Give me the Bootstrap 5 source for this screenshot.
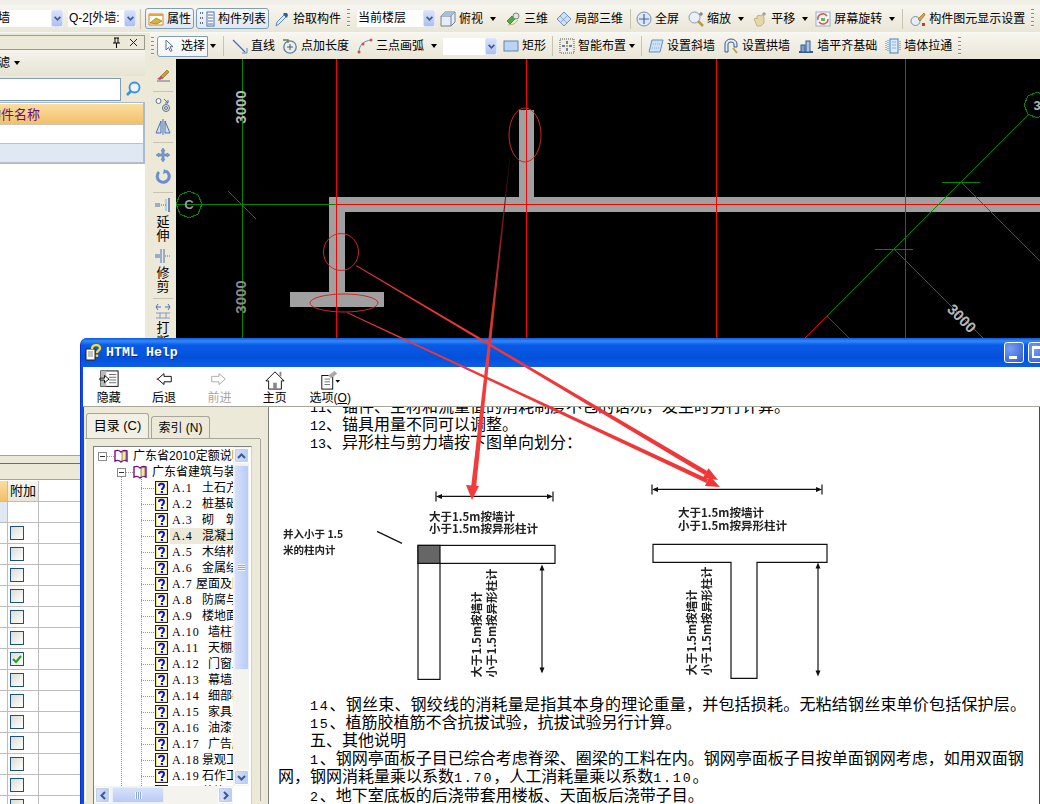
<!DOCTYPE html>
<html lang="zh-CN"><head><meta charset="utf-8"><title>HTML Help</title>
<link href="https://cdn.jsdelivr.net/npm/bootstrap@5.3.0/dist/css/bootstrap.min.css" rel="stylesheet">
<style>
html,body{width:1040px;height:804px;margin:0;overflow:hidden}
body{background:#ece9d8;font-family:"Liberation Sans","Noto Sans CJK SC",sans-serif;font-size:12px;color:#000;line-height:1.2}
.top-strip{height:5px;background:#f1f0e8}
.tb-one{height:28px;background:linear-gradient(#f7f6ef,#e9e6d6);border-bottom:1px solid #f8f8f4;overflow:hidden}
.main-area{height:771px}
.left-pane{width:145px;flex:none;padding-top:1px;overflow:hidden}
.right-pane{width:895px;margin-left:5px}
.tb-two{height:26px;flex:none;background:linear-gradient(#f7f6ef,#e9e6d6);overflow:hidden;position:relative}
.tb-end{margin-left:auto}
.tbi.btn{display:inline-flex;align-items:center;gap:3px;padding:0 2px;height:21px;font-size:12px;line-height:1;color:#000;border:1px solid transparent;border-radius:3px;white-space:nowrap;flex:none;background:none}
.tbi.on{border-color:#7e9db9;background:linear-gradient(#f4f8fb,#dfe9f2)}
.tbi.sel.btn{padding:0 2px 0 3px;gap:4px;border-radius:3px 0 0 3px;background:linear-gradient(#fff,#f1f4f8)}
.ic{width:16px;height:16px;flex:none;display:block}
.tri{width:0;height:0;border:3px solid transparent;border-top:4px solid #000;border-bottom:0;margin-left:4px;flex:none}
.sepv{width:1px;height:20px;background:#c7c5b2;flex:none;margin:0 4px}
.sepv-t{margin-right:2px}
.grip{width:3px;height:19px;flex:none;margin:0 3px;background:repeating-linear-gradient(#8c8a7e 0 1px,#f7f6f0 1px 2px,transparent 2px 4px)}
.grip-f{margin:0 2px 0 1px}
.cbo{display:flex;align-items:center;background:#fff;height:17px;flex:none;overflow:hidden;font-size:12px}
.cbo-txt{flex:1;white-space:nowrap;padding-left:1px;overflow:hidden}
.cbo-btn{width:12px;height:17px;flex:none;background:linear-gradient(#d7e2fb,#aebff0);border:1px solid #dce6fb;border-radius:2px;display:flex;align-items:center;justify-content:center}
.cw-a{width:63px}.cw-a .cbo-txt{margin-left:-3px}
.cw-b{width:68px;margin-left:5px}
.cw-c{width:78px}.cw-d{width:54px}
.ml0{margin-left:0}.ml1{margin-left:1px}.ml2{margin-left:2px}.ml3{margin-left:3px}.ml4{margin-left:4px}.ml7{margin-left:7px}.mr3{margin-right:3px}
.pane-cap{height:15px;margin-top:1px;border-top:1px solid #9a9a90;border-bottom:1px solid #9a9a90;border-right:1px solid #9a9a90;background:#ece9d8;padding-right:6px;gap:8px;flex:none}
.pane-filter{height:26px;background:linear-gradient(#f5f4ec,#e6e3d2);flex:none}
.clip-l{margin-left:-2px}
.pane-search{height:26px;flex:none;background:#ece9d8;padding:1px 0}
.search-box{width:121px;height:23px;background:#fff;border:1px solid #7f9db9;border-left:0}
.search-ic{margin-left:4px}
.grid-a{flex:none;background:#fff;border:1px solid #a8bcd0;border-left:0;border-right:2px solid #a8bcd0;padding:1px 0;height:62px}
.g-hd{height:21px;background:linear-gradient(#fbdd9f,#f2c069);color:#660a85;font-size:13px;line-height:21px;border-bottom:1px solid #c8c8c0;white-space:nowrap;overflow:hidden}
.g-hd span{margin-left:-12px;display:block}
.g-row{height:19px;border-bottom:1px solid #b8c0c8}
.g-row.alt{background:#dfe8f3}
.pane-white{flex:1;background:#fff}
.pane-cap2{height:25px;flex:none;background:linear-gradient(#ece9d8 0 7px,#6f6f60 7px 8px,#ece9d8 8px);border-top:1px solid #8fa8be;border-bottom:1px solid #8fa8be}
.grid-b{flex:none;background:#fff;padding-top:1px;height:324px;overflow:hidden}
.gb-row{height:21px;display:flex;border-bottom:1px solid #bdbdbd}
.gb-a{width:8px;border-right:1px solid #bdbdbd;flex:none}
.gb-b{width:31px;border-right:1px solid #bdbdbd;flex:none;display:flex;align-items:center;padding-left:2px}
.gb-hd .gb-a{background:linear-gradient(#fbdd9f,#f2c069)}
.gb-hd .gb-b{background:linear-gradient(#f7f6ee,#e9e6d6);font-size:13px}
.gb-alt .gb-a{background:#dfe8f3}
.cb{width:14px;height:14px;border:1px solid #1c5180;background:linear-gradient(135deg,#dcdcd4,#fff);display:flex;align-items:center;justify-content:center}
.v-tool{width:26px;flex:none;background:#ece9d8;padding-top:5px;align-items:center;overflow:hidden}
.v-tool .ic{margin:3px 0}
.v-sep{width:20px;height:1px;background:#c7c5b2;margin:4px 0 1px;flex:none}
.v-sep-f{margin:5px 0 2px}
.v-t2{margin-top:5px!important}
.v-txt{font-size:13px;line-height:14px;width:13px;text-align:center;margin-top:-1px;flex:none}
.cad-box{flex:1;background:#000;overflow:hidden}
.cad-svg{display:block}
.cad-svg text{font-family:"Liberation Sans",sans-serif}
.help-win{left:80px;top:338px;width:1000px;height:480px;background:#0a4fdc;border-radius:7px 7px 0 0;padding:0 3px 3px 3px;border-left:1px solid #0831d9}
.help-cap{height:29px;margin:0 -3px;padding:0 8px 0 4px;background:linear-gradient(#0a58e4 0,#2f8bf8 3px,#0a5ae6 7px,#0351da 20px,#0a5de8 28px);border-radius:7px 7px 0 0;gap:4px;flex:none}
.help-title{font-family:"Liberation Mono",monospace;font-weight:700;font-size:13.3px;color:#fff;text-shadow:1px 1px #0a2a90}
.cap-btn{width:20px;height:21px;border:1px solid #fff;border-radius:3px;background:radial-gradient(circle at 30% 30%,#7aa0f4,#2a55d8);position:relative;flex:none}
.cap-min::after{content:"";position:absolute;left:4px;bottom:3px;width:8px;height:3px;background:#fff}
.cap-max::after{content:"";position:absolute;left:3px;top:3px;width:12px;height:12px;border:2px solid #fff;border-top-width:3px}
.cap-x{background:radial-gradient(circle at 30% 30%,#f09a80,#d8401c)}
.help-bar{height:40px;background:#fff;border-bottom:1px solid #a8a698;flex:none;margin-left:-1px}
.help-bar>:first-child{margin-left:-2px}
.hb.btn{width:55.4px;height:39px;padding:3px 0 0;font-size:12px;line-height:14px;border:0;border-radius:0;display:flex;flex-direction:column;align-items:center;color:#000;white-space:nowrap;gap:1px}
.hb.off.btn{color:#a8a79c;opacity:1}
.hb .ic-l{width:20px;height:20px;display:block;flex:none}
.help-body{height:397px;flex:none}
.nav-pane{width:179px;flex:none;background:#ece9d8;padding:7px 3px 0 1px}
.help-tabs.nav-tabs{border-bottom:1px solid #a8a698;gap:2px;padding-left:1px;--bs-nav-tabs-border-width:0;height:25px;flex-wrap:nowrap;align-items:flex-end}
.help-tabs .nav-link,.help-tabs .nav-link.active{font-size:12px;line-height:14px;padding:4px 3px 3px;color:#000;border:1px solid #a8a698;border-bottom:0;border-radius:3px 3px 0 0;background:#ece9d8;margin:0;text-align:center;white-space:nowrap}
.help-tabs .nav-link{width:59px;height:22px}
.help-tabs .nav-link.active{width:63px;height:25px;padding-top:5px;background:#f2f0e4;font-size:13px}
.nav-frame{height:362px;border-left:1px solid #fff;border-right:1px solid #a8a698;padding:7px 8px 0 7px;width:176px}
.tree-box{border:1px solid #808080;border-right-color:#d4d0c8;height:360px;background:#fff;overflow:hidden;width:159px}
.tree-top{height:339px;flex:none}
.tree-list{width:139px;flex:none;overflow:hidden;padding-top:1px;font-size:12px;background-image:repeating-linear-gradient(#999 0 1px,transparent 1px 2px),repeating-linear-gradient(#999 0 1px,transparent 1px 2px);background-size:1px 100%,1px 100%;background-position:27px 30px,47px 30px;background-repeat:no-repeat}
.t-row{height:16px;display:flex;align-items:center;white-space:nowrap}
.t-row svg{flex:none}
.t-exp{width:9px;height:9px;border:1px solid #8a8a8a;background:#fff;position:relative;flex:none}
.t-exp::after{content:"";position:absolute;left:1px;top:3px;width:5px;height:1px;background:#333}
.t-dots{width:7px;height:1px;flex:none;background:repeating-linear-gradient(90deg,#999 0 1px,transparent 1px 2px)}
.t-l1{padding-left:4px}.t-l2{padding-left:23px}
.t-leaf{padding-left:47px}
.t-leaf .t-dots{width:14px}
.t-tx{padding-left:4px}
.t-lb{display:inline-block;width:30px;font-family:"Liberation Serif",serif;font-size:12px;letter-spacing:1px}
.t-lb.ss{width:24px}.t-lb.ll{width:36px}
.t-sel{background:#ece9d8;flex:1;height:16px;display:flex;align-items:center;margin-left:2px;padding-left:2px}
.sb-v{width:16px;flex:none;background:#f4f3ee;padding:1px}
.sb-btn{border:1px solid #fff;background:linear-gradient(90deg,#d6e2fb,#b8cbf5);border-radius:2px;display:flex;align-items:center;justify-content:center;flex:none;box-shadow:0 0 0 1px #c0cfe8 inset}
.sb-v .sb-btn{width:15px;height:15px}
.sb-thumb-v{height:205px;width:15px;margin-top:2px;background:linear-gradient(90deg,#d6e2fb,#b8cbf5);border:1px solid #e8eefb;border-radius:2px;flex:none;display:flex;align-items:center;justify-content:center}
.grip-l{width:7px;height:7px;background:repeating-linear-gradient(#f2f6ff 0 1px,#8aa4dc 1px 2px)}
.sb-h{height:18px;background:#f4f3ee;width:139px;padding:1px 0 1px 1px;gap:2px;flex:none}
.sb-h .sb-btn{width:15px;height:16px}
.sb-thumb-h{width:52px;height:16px;background:linear-gradient(#d6e2fb,#b8cbf5);border:1px solid #e8eefb;border-radius:2px;display:flex;align-items:center;justify-content:center}
.grip-h{width:7px;height:7px;background:repeating-linear-gradient(90deg,#f2f6ff 0 1px,#8aa4dc 1px 2px)}
.split{width:6px;flex:none;background:#ece9d8;border-right:1px solid #808080}
.doc{width:770px;flex:none;background:#fff;overflow:hidden;padding-left:9px;font-size:16px;font-family:"Noto Sans CJK SC",sans-serif}
.doc-in{margin-top:-11px}
.hl{height:18.2px;line-height:18.2px;white-space:nowrap;margin:0}
.hl.ind{padding-left:32px}
.hw{font-family:"Liberation Mono",monospace;font-size:13.33px}
.hw-w{letter-spacing:1.8px}
.ls-a{letter-spacing:.2px}
.fig{display:block;filter:blur(.45px)}
.fig text{font-family:"Noto Sans CJK SC",sans-serif;font-weight:700}
.annot{left:0;top:0;pointer-events:none}
</style></head>
<body class="position-relative">
<svg width="0" height="0" class="position-absolute">
<defs>
<symbol id="i-prop" viewBox="0 0 16 16"><path d="M1 3h14v11H1z" fill="#fff" stroke="#d8861e"/><path d="M1 3h14v2H1z" fill="#f0a03c"/><path d="M2 12l6-5 6 3-5 3z" fill="#d8b43c" stroke="#7a6a10" stroke-width=".6"/></symbol>
<symbol id="i-list" viewBox="0 0 16 16"><path d="M1 2h3M1 7h3M1 12h3" stroke="#5a7090" stroke-width="2" stroke-dasharray="1 1"/><rect x="8" y="1" width="7" height="14" fill="#fff" stroke="#4a6ea8"/><path d="M9 4h5M9 7h5M9 10h5M9 13h5" stroke="#4a6ea8"/></symbol>
<symbol id="i-pick" viewBox="0 0 16 16"><path d="M2 15l1-4 7-7 2 2-7 7z" fill="#dfeafb" stroke="#5e86c0"/><path d="M10 2l3 0 1 2-1 3-4-4z" fill="#2e5ea8"/></symbol>
<symbol id="i-cube" viewBox="0 0 16 16"><path d="M1 5l4-4h10v10l-4 4H1z" fill="#e6edf6" stroke="#708090"/><path d="M1 5h10v10M11 5l4-4" fill="none" stroke="#708090"/><path d="M5 1l-4 4h10l4-4z" fill="#a8c0dc"/></symbol>
<symbol id="i-3d" viewBox="0 0 16 16"><path d="M2 10l5-5 3 3-5 5z" fill="#50a848" stroke="#2f7030" stroke-width=".7"/><circle cx="11" cy="5" r="3" fill="#dfe8d8" stroke="#788"/><path d="M3 14l6-1 4-4" stroke="#c8b060" fill="none"/></symbol>
<symbol id="i-p3d" viewBox="0 0 16 16"><path d="M1 8l7-7 7 7-7 7z" fill="#cfe0f6" stroke="#6a90c4"/><path d="M4 5l7 7M8 1l7 7M1 8l7 7M12 4l-7 7" stroke="#6a90c4" stroke-width=".7"/></symbol>
<symbol id="i-full" viewBox="0 0 16 16"><circle cx="8" cy="8" r="7" fill="#dfe8f6" stroke="#7a8fae"/><path d="M8 3v10M3 8h10" stroke="#3c64a8" stroke-width="1.2"/></symbol>
<symbol id="i-zoom" viewBox="0 0 16 16"><circle cx="6.500" cy="6.500" r="5.500" fill="#e8f0fa" stroke="#8a9ab0"/><path d="M10 10l5 5" stroke="#b89a40" stroke-width="2.500"/><path d="M13 1v4M11 3h4" stroke="#667" /></symbol>
<symbol id="i-pan" viewBox="0 0 16 16"><path d="M2 8l2-1 1 1V5l2-1 1 1 2-1 2 2v6l-3 3H5z" fill="#e6d6a8" stroke="#b0a070" stroke-width=".7"/><path d="M12 1v4M10 3h4" stroke="#888"/></symbol>
<symbol id="i-rot" viewBox="0 0 16 16"><rect x="1" y="1" width="14" height="14" fill="#f4f8fc" stroke="#8cb0d8"/><path d="M3 9a5 5 0 0 1 9-4" stroke="#e0503c" fill="none" stroke-width="1.500"/><path d="M13 8a5 5 0 0 1-9 3" stroke="#e0503c" fill="none" stroke-width="1.500"/><path d="M6 7h4v3H6z" fill="#70b050"/></symbol>
<symbol id="i-disp" viewBox="0 0 16 16"><circle cx="5.500" cy="10" r="4.500" fill="#e6eef8" stroke="#7a8fae"/><path d="M8 8l6-6 1 2-5 6z" fill="#d8a840" stroke="#806010" stroke-width=".6"/><path d="M12 12h3v3h-3z" fill="#b84040"/></symbol>
<symbol id="i-cur" viewBox="0 0 16 16"><path d="M5 2l0 10 2.500-2.500 2 4 1.500-.8-2-4H12z" fill="#fff" stroke="#5a7090"/></symbol>
<symbol id="i-line" viewBox="0 0 16 16"><path d="M1 2l12 12" stroke="#3c70b8" stroke-width="1.200"/><path d="M15 15h-5M15 15v-5" stroke="#3c70b8" stroke-width=".8"/></symbol>
<symbol id="i-ptl" viewBox="0 0 16 16"><circle cx="8" cy="9" r="6.200" fill="none" stroke="#5a7ca8" stroke-width="1.300"/><path d="M8 6v6M5 9h6" stroke="#3c5c90"/><path d="M1 2h5v3" stroke="#6a7a60" fill="none" stroke-width="1.400"/></symbol>
<symbol id="i-arc" viewBox="0 0 16 16"><path d="M2 14C2 7 7 3 14 2" stroke="#5a90c8" fill="none"/><circle cx="2" cy="14" r="1.500" fill="#d85040"/><circle cx="6" cy="6" r="1.500" fill="#d85040"/><circle cx="14" cy="2" r="1.500" fill="#d85040"/></symbol>
<symbol id="i-rec" viewBox="0 0 16 16"><rect x="1" y="3" width="14" height="10" fill="#bcd4f0" stroke="#5a84b8"/></symbol>
<symbol id="i-sm" viewBox="0 0 16 16"><rect x="1" y="1" width="14" height="14" fill="#f0eee2" stroke="#555" stroke-dasharray="1 1"/><path d="M8 3v3M8 10v3M3 8h3M10 8h3" stroke="#3c5c90" stroke-width="1.500"/><circle cx="8" cy="8" r="1" fill="#c83"/></symbol>
<symbol id="i-sl" viewBox="0 0 16 16"><path d="M4 2h11l-3 12H1z" fill="#cfe0f6" stroke="#5a90c8"/><path d="M3 6h10M2 10h10" stroke="#8ab0dc" stroke-dasharray="1 1"/></symbol>
<symbol id="i-ar" viewBox="0 0 16 16"><path d="M2 14V6a6 5 0 0 1 12 0v3h-3V6a3 2 0 0 0-6 0v8z" fill="#e6eef8" stroke="#345c90"/><path d="M10 10l4 5" stroke="#c8a040" stroke-width="2"/></symbol>
<symbol id="i-al" viewBox="0 0 16 16"><path d="M1 14h14" stroke="#345c90" stroke-width="2"/><rect x="3" y="7" width="4" height="7" fill="#7ca0d0" stroke="#345c90"/><rect x="8" y="3" width="4" height="11" fill="#a8c4e6" stroke="#345c90"/></symbol>
<symbol id="i-wl" viewBox="0 0 16 16"><rect x="5" y="1" width="8" height="14" fill="#dceafa" stroke="#4a80c0"/><path d="M1 3v10M3 2v12M15 3v10" stroke="#4a80c0" stroke-dasharray="1 1"/><path d="M7 4h4M7 7h4M7 10h4" stroke="#8ab0dc"/></symbol>
<symbol id="i-br" viewBox="0 0 16 16"><path d="M2 14h13" stroke="#5a7090"/><path d="M5 10l7-7 2 2-7 7z" fill="#c8a040" stroke="#806010" stroke-width=".6"/><path d="M2 12l4-3 2 2-3 2z" fill="#c84880"/></symbol>
<symbol id="i-off" viewBox="0 0 16 16"><circle cx="3.500" cy="4" r="2.500" fill="#fff" stroke="#5a7090"/><circle cx="11" cy="11" r="3.500" fill="none" stroke="#5a7090"/><circle cx="11" cy="11" r="1.500" fill="none" stroke="#5a7090"/><path d="M9 2l4 4M13 3v3h-3" stroke="#3c70b8" fill="none"/></symbol>
<symbol id="i-mir" viewBox="0 0 16 16"><path d="M6 2L1 14h5zM10 2l5 12h-5z" fill="#cfe0f6" stroke="#4a70b0"/><path d="M8 0v16" stroke="#4a70b0"/></symbol>
<symbol id="i-mv" viewBox="0 0 16 16"><path d="M8 1l2 3H9v3h3V6l3 2-3 2V9H9v3h1l-2 3-2-3h1V9H4v1L1 8l3-2v1h3V4H6z" fill="#7c9cc8" stroke="#4a70a8" stroke-width=".5"/></symbol>
<symbol id="i-rt" viewBox="0 0 16 16"><path d="M4 3a6 6 0 1 0 7-1" fill="none" stroke="#6a8cd0" stroke-width="3"/><path d="M9 0l4 3-5 2z" fill="#6a8cd0"/></symbol>
<symbol id="i-ext" viewBox="0 0 16 16"><path d="M14 1v14" stroke="#4a70b0" stroke-width="1.500"/><path d="M11 2v12" stroke="#a8c0e0" stroke-width="1.500"/><path d="M0 7h5M0 9h5" stroke="#4a70b0"/><path d="M6 8h5" stroke="#4a70b0" stroke-dasharray="1 1"/></symbol>
<symbol id="i-trm" viewBox="0 0 16 16"><path d="M6 1v14M9 1v14" stroke="#7c9cc8" stroke-width="1.500"/><path d="M0 7h5M0 9h5" stroke="#4a70b0"/><path d="M10 8h6" stroke="#4a70b0" stroke-dasharray="1 1"/></symbol>
<symbol id="i-brk" viewBox="0 0 16 16"><path d="M1 10h14M1 15h14M5 10v5M11 10v5" stroke="#7c9cc8"/><path d="M1 4h5M10 4h5" stroke="#4a70b0"/><path d="M3 1L1 4l2 3M13 1l2 3-2 3" stroke="#4a70b0" fill="none"/></symbol>
<symbol id="i-q" viewBox="0 0 13 14"><rect x=".5" y=".5" width="12" height="13" fill="#fffbe0" stroke="#222"/><path d="M1.500 1.500h10v11h-10z" fill="none" stroke="#e0d050" stroke-dasharray="1 1"/><path d="M4 5c0-3 5-3 5 0 0 2-2 2-2 4" fill="none" stroke="#0a10d8" stroke-width="2"/><rect x="5.800" y="10" width="2.200" height="2" fill="#0a10d8"/></symbol>
<symbol id="i-bk" viewBox="0 0 15 14"><path d="M1 2c2-1 4-1 6 1 2-2 4-2 6-1v10c-2-1-4-1-6 1-2-2-4-2-6-1z" fill="#fff" stroke="#7a0a8a" stroke-width="1.400"/><path d="M8 3l4-1v9l-4 1z" fill="#f4e69c" stroke="#222" stroke-width=".5"/></symbol>
<symbol id="i-up" viewBox="0 0 11 8"><path d="M2 6l3.500-3.500L9 6" fill="none" stroke="#3c5a90" stroke-width="2"/></symbol>
<symbol id="i-dn" viewBox="0 0 11 8"><path d="M2 2l3.500 3.500L9 2" fill="none" stroke="#3c5a90" stroke-width="2"/></symbol>
<symbol id="i-lf" viewBox="0 0 8 11"><path d="M6 2L2.500 5.500 6 9" fill="none" stroke="#3c5a90" stroke-width="2"/></symbol>
<symbol id="i-rg" viewBox="0 0 8 11"><path d="M2 2l3.500 3.500L2 9" fill="none" stroke="#3c5a90" stroke-width="2"/></symbol>
</defs></svg>

<div class="top-strip"></div>
<div class="tb-one d-flex align-items-center">
  <div class="cbo cw-a"><span class="cbo-txt">墙</span><span class="cbo-btn"><svg width="9" height="7"><use href="#i-dn"/></svg></span></div>
  <div class="cbo cw-b"><span class="cbo-txt">Q-2[外墙:</span><span class="cbo-btn"><svg width="9" height="7"><use href="#i-dn"/></svg></span></div>
  <span class="sepv"></span>
  <button class="btn tbi on"><svg class="ic"><use href="#i-prop"/></svg>属性</button>
  <button class="btn tbi on ml2"><svg class="ic"><use href="#i-list"/></svg>构件列表</button>
  <button class="btn tbi ml2"><svg class="ic"><use href="#i-pick"/></svg>拾取构件</button>
  <span class="grip"></span>
  <div class="cbo cw-c ml4"><span class="cbo-txt">当前楼层</span><span class="cbo-btn"><svg width="9" height="7"><use href="#i-dn"/></svg></span></div>
  <button class="btn tbi ml2"><svg class="ic"><use href="#i-cube"/></svg>俯视<span class="tri"></span></button>
  <button class="btn tbi ml3"><svg class="ic"><use href="#i-3d"/></svg>三维</button>
  <button class="btn tbi ml2"><svg class="ic"><use href="#i-p3d"/></svg>局部三维</button>
  <span class="sepv sepv-t"></span>
  <button class="btn tbi"><svg class="ic"><use href="#i-full"/></svg>全屏</button>
  <button class="btn tbi ml3"><svg class="ic"><use href="#i-zoom"/></svg>缩放<span class="tri"></span></button>
  <button class="btn tbi ml2"><svg class="ic"><use href="#i-pan"/></svg>平移<span class="tri"></span></button>
  <button class="btn tbi ml1"><svg class="ic"><use href="#i-rot"/></svg>屏幕旋转<span class="tri"></span></button>
  <span class="sepv"></span>
  <button class="btn tbi"><svg class="ic"><use href="#i-disp"/></svg>构件图元显示设置</button>
  <span class="grip"></span>
</div>

<div class="d-flex main-area">
  <aside class="left-pane d-flex flex-column">
    <div class="pane-cap d-flex align-items-center justify-content-end">
      <svg width="9" height="11" viewBox="0 0 9 11"><path d="M2 1h5M3 1v5M6 1v5M1 6h7M4.500 6v5" stroke="#000" fill="none"/></svg>
      <svg width="9" height="9" viewBox="0 0 9 9"><path d="M1 1l7 7M8 1L1 8" stroke="#222"/></svg>
    </div>
    <div class="pane-filter d-flex align-items-center"><span class="clip-l">滤</span><span class="tri"></span></div>
    <div class="pane-search d-flex align-items-center">
      <div class="search-box"></div>
      <svg class="ic search-ic" viewBox="0 0 16 16"><circle cx="9.500" cy="6.500" r="5" fill="#eaf4ff" stroke="#3c90d8" stroke-width="1.800"/><path d="M6 10l-4 4" stroke="#3c90d8" stroke-width="2.500"/></svg>
    </div>
    <div class="grid-a">
      <div class="g-hd"><span>构件名称</span></div>
      <div class="g-row"></div>
      <div class="g-row alt"></div>
    </div>
    <div class="pane-white"></div>
    <div class="pane-cap2"></div>
    <div class="grid-b">
      <div class="gb-row gb-hd"><div class="gb-a"></div><div class="gb-b">附加</div></div>
      <div class="gb-row gb-alt"><div class="gb-a"></div><div class="gb-b"></div></div>
      <div class="gb-row"><div class="gb-a"></div><div class="gb-b"><span class="cb"></span></div></div>
      <div class="gb-row"><div class="gb-a"></div><div class="gb-b"><span class="cb"></span></div></div>
      <div class="gb-row"><div class="gb-a"></div><div class="gb-b"><span class="cb"></span></div></div>
      <div class="gb-row"><div class="gb-a"></div><div class="gb-b"><span class="cb"></span></div></div>
      <div class="gb-row"><div class="gb-a"></div><div class="gb-b"><span class="cb"></span></div></div>
      <div class="gb-row"><div class="gb-a"></div><div class="gb-b"><span class="cb"></span></div></div>
      <div class="gb-row"><div class="gb-a"></div><div class="gb-b"><span class="cb"><svg width="10" height="9" viewBox="0 0 10 9"><path d="M1 4l3 3 5-6" fill="none" stroke="#21a121" stroke-width="2"/></svg></span></div></div>
      <div class="gb-row"><div class="gb-a"></div><div class="gb-b"><span class="cb"></span></div></div>
      <div class="gb-row"><div class="gb-a"></div><div class="gb-b"><span class="cb"></span></div></div>
      <div class="gb-row"><div class="gb-a"></div><div class="gb-b"><span class="cb"></span></div></div>
      <div class="gb-row"><div class="gb-a"></div><div class="gb-b"><span class="cb"></span></div></div>
      <div class="gb-row"><div class="gb-a"></div><div class="gb-b"><span class="cb"></span></div></div>
      <div class="gb-row"><div class="gb-a"></div><div class="gb-b"><span class="cb"></span></div></div>
      <div class="gb-row"><div class="gb-a"></div><div class="gb-b"><span class="cb"></span></div></div>
    </div>
  </aside>

  <div class="right-pane d-flex flex-column">
    <div class="tb-two d-flex align-items-center">
      <span class="grip grip-f"></span>
      <button class="btn tbi on sel ml1"><svg class="ic"><use href="#i-cur"/></svg>选择</button><span class="tri ml2"></span>
      <span class="sepv ml7"></span>
      <button class="btn tbi ml1"><svg class="ic"><use href="#i-line"/></svg>直线</button>
      <button class="btn tbi ml1"><svg class="ic"><use href="#i-ptl"/></svg>点加长度</button>
      <button class="btn tbi ml2"><svg class="ic"><use href="#i-arc"/></svg>三点画弧<span class="tri"></span></button>
      <div class="cbo cw-d ml3"><span class="cbo-txt"></span><span class="cbo-btn"><svg width="9" height="7"><use href="#i-dn"/></svg></span></div>
      <button class="btn tbi ml3"><svg class="ic"><use href="#i-rec"/></svg>矩形</button>
      <span class="sepv ml3 mr3"></span>
      <button class="btn tbi"><svg class="ic"><use href="#i-sm"/></svg>智能布置<span class="tri ml0"></span></button>
      <span class="sepv ml3 mr3"></span>
      <button class="btn tbi"><svg class="ic"><use href="#i-sl"/></svg>设置斜墙</button>
      <button class="btn tbi ml2"><svg class="ic"><use href="#i-ar"/></svg>设置拱墙</button>
      <button class="btn tbi ml2"><svg class="ic"><use href="#i-al"/></svg>墙平齐基础</button>
      <button class="btn tbi ml2"><svg class="ic"><use href="#i-wl"/></svg>墙体拉通</button>
      <span class="grip tb-end"></span>
    </div>
    <div class="d-flex flex-grow-1">
      <div class="v-tool d-flex flex-column">
        <svg class="ic"><use href="#i-br"/></svg><span class="v-sep v-sep-f"></span>
        <svg class="ic"><use href="#i-off"/></svg><svg class="ic"><use href="#i-mir"/></svg><span class="v-sep"></span>
        <svg class="ic"><use href="#i-mv"/></svg><svg class="ic"><use href="#i-rt"/></svg><span class="v-sep"></span>
        <svg class="ic"><use href="#i-ext"/></svg><span class="v-txt">延伸</span>
        <svg class="ic v-t2"><use href="#i-trm"/></svg><span class="v-txt">修剪</span><span class="v-sep"></span>
        <svg class="ic"><use href="#i-brk"/></svg><span class="v-txt">打断</span>
      </div>
      <div class="cad-box">
        <svg class="cad-svg" width="864" height="279" viewBox="176 59 864 279">
          <g fill="#a0a0a0"><rect x="329" y="197" width="711" height="15"/><rect x="329" y="197" width="16" height="95"/><rect x="290" y="292" width="94" height="15"/><rect x="519" y="110" width="15" height="87"/></g>
          <g stroke="#f00" fill="none"><path d="M336.500 59V338M526.500 59V338M716.500 59V338M905.500 59V338M336 204.500H1040"/><path d="M827 316l-22 22M827 316l22 22" stroke="#e00"/></g>
          <g stroke="#080" fill="none" shape-rendering="crispEdges"><path d="M242.500 59V338M176 204.500H336M228 191l28 28"/><path d="M1028 115L827 316M942 182.500h38M875 249.500h38M961 182l79 79M894 249l89 89"/><polygon points="189,191 198,195 202,204 198,214 189,218 180,214 176,204 180,195"/><polygon points="1037,92 1046,96 1050,105 1046,114 1037,118 1028,114 1024,105 1028,96"/></g>
          <g fill="#b8b8b8" font-size="15" font-weight="700" text-anchor="middle">
            <text transform="translate(246,107) rotate(-90)">3000</text>
            <text transform="translate(246,297) rotate(-90)" fill="#8a8a8a">3000</text>
            <text transform="translate(958,322) rotate(45)">3000</text>
            <text x="189" y="209" font-size="13" fill="#999">C</text>
            <text x="1037" y="110" font-size="13">3</text>
          </g>
        </svg>
      </div>
    </div>
  </div>
</div>

<section class="help-win position-absolute d-flex flex-column">
  <div class="help-cap d-flex align-items-center">
    <svg width="17" height="18" viewBox="0 0 17 18"><path d="M1 5h9v11H1z" fill="#fff" stroke="#222"/><path d="M3 8h5M3 10h5M3 12h5" stroke="#888"/><path d="M7 5c0-5 8-5 8-1 0 3-3 2-3 5" fill="none" stroke="#ffd820" stroke-width="2.400"/><rect x="10.800" y="10.500" width="2.400" height="2.400" fill="#ffd820"/></svg>
    <span class="help-title">HTML Help</span>
    <span class="ms-auto d-flex gap-1"><span class="cap-btn cap-min"></span><span class="cap-btn cap-max"></span><span class="cap-btn cap-x"></span></span>
  </div>
  <div class="help-bar d-flex">
    <button class="btn hb"><svg class="ic-l" viewBox="0 0 22 22"><rect x="2" y="1" width="19" height="17" fill="#fff" stroke="#000"/><rect x="2" y="1" width="6" height="17" fill="#bbb"/><path d="M11 5h8M11 8h8M11 11h8M11 14h8" stroke="#666"/><path d="M1 9h5V6l5 4-5 4v-3H1z" fill="#fff" stroke="#000"/></svg><span>隐藏</span></button>
    <button class="btn hb"><svg class="ic-l" viewBox="0 0 22 22"><path d="M4 10l7-6v3h8v6h-8v3z" fill="#fff" stroke="#000"/><rect x="3" y="9" width="2" height="2" fill="#c03020"/></svg><span>后退</span></button>
    <button class="btn hb off"><svg class="ic-l" viewBox="0 0 22 22"><path d="M18 10l-7-6v3H3v6h8v3z" fill="#fff" stroke="#a8a79c"/></svg><span>前进</span></button>
    <button class="btn hb"><svg class="ic-l" viewBox="0 0 22 22"><path d="M1 12L11 2l10 10h-3v9H4v-9z" fill="#fff" stroke="#000"/><rect x="9" y="14" width="4" height="7" fill="#888"/><path d="M16 2h2v5h-2z" fill="#888"/></svg><span>主页</span></button>
    <button class="btn hb"><svg class="ic-l" viewBox="0 0 22 22"><rect x="2" y="6" width="12" height="15" fill="#fff" stroke="#000"/><path d="M5 10h6M5 13h6M5 16h6" stroke="#666"/><path d="M9 6l7-5 3 3-7 5z" fill="#aaa"/><path d="M17 11h5l-2.500 3z" fill="#000"/></svg><span>选项(<u>O</u>)</span></button>
  </div>
  <div class="help-body d-flex">
    <div class="nav-pane d-flex flex-column">
      <ul class="nav nav-tabs help-tabs">
        <li class="nav-item"><a class="nav-link active" href="#">目录 (C)</a></li>
        <li class="nav-item"><a class="nav-link" href="#">索引 (N)</a></li>
      </ul>
      <div class="nav-frame">
        <div class="tree-box d-flex flex-column">
          <div class="tree-top d-flex">
            <div class="tree-list">
              <div class="t-row t-l1"><span class="t-exp"></span><span class="t-dots"></span><svg width="15" height="14"><use href="#i-bk"/></svg><span class="t-tx">广东省2010定额说明</span></div>
              <div class="t-row t-l2"><span class="t-exp"></span><span class="t-dots"></span><svg width="15" height="14"><use href="#i-bk"/></svg><span class="t-tx">广东省建筑与装饰</span></div>
              <div class="t-row t-leaf"><span class="t-dots"></span><svg width="13" height="14"><use href="#i-q"/></svg><span class="t-tx"><span class="t-lb">A.1</span>土石方工</span></div>
              <div class="t-row t-leaf"><span class="t-dots"></span><svg width="13" height="14"><use href="#i-q"/></svg><span class="t-tx"><span class="t-lb">A.2</span>桩基础工</span></div>
              <div class="t-row t-leaf"><span class="t-dots"></span><svg width="13" height="14"><use href="#i-q"/></svg><span class="t-tx"><span class="t-lb">A.3</span>砌　筑</span></div>
              <div class="t-row t-leaf"><span class="t-dots"></span><svg width="13" height="14"><use href="#i-q"/></svg><span class="t-sel"><span class="t-lb">A.4</span>混凝土</span></div>
              <div class="t-row t-leaf"><span class="t-dots"></span><svg width="13" height="14"><use href="#i-q"/></svg><span class="t-tx"><span class="t-lb">A.5</span>木结构</span></div>
              <div class="t-row t-leaf"><span class="t-dots"></span><svg width="13" height="14"><use href="#i-q"/></svg><span class="t-tx"><span class="t-lb">A.6</span>金属结</span></div>
              <div class="t-row t-leaf"><span class="t-dots"></span><svg width="13" height="14"><use href="#i-q"/></svg><span class="t-tx"><span class="t-lb ss">A.7</span>屋面及防</span></div>
              <div class="t-row t-leaf"><span class="t-dots"></span><svg width="13" height="14"><use href="#i-q"/></svg><span class="t-tx"><span class="t-lb">A.8</span>防腐与</span></div>
              <div class="t-row t-leaf"><span class="t-dots"></span><svg width="13" height="14"><use href="#i-q"/></svg><span class="t-tx"><span class="t-lb">A.9</span>楼地面</span></div>
              <div class="t-row t-leaf"><span class="t-dots"></span><svg width="13" height="14"><use href="#i-q"/></svg><span class="t-tx"><span class="t-lb ll">A.10</span>墙柱面</span></div>
              <div class="t-row t-leaf"><span class="t-dots"></span><svg width="13" height="14"><use href="#i-q"/></svg><span class="t-tx"><span class="t-lb ll">A.11</span>天棚工</span></div>
              <div class="t-row t-leaf"><span class="t-dots"></span><svg width="13" height="14"><use href="#i-q"/></svg><span class="t-tx"><span class="t-lb ll">A.12</span>门窗工</span></div>
              <div class="t-row t-leaf"><span class="t-dots"></span><svg width="13" height="14"><use href="#i-q"/></svg><span class="t-tx"><span class="t-lb ll">A.13</span>幕墙工</span></div>
              <div class="t-row t-leaf"><span class="t-dots"></span><svg width="13" height="14"><use href="#i-q"/></svg><span class="t-tx"><span class="t-lb ll">A.14</span>细部装</span></div>
              <div class="t-row t-leaf"><span class="t-dots"></span><svg width="13" height="14"><use href="#i-q"/></svg><span class="t-tx"><span class="t-lb ll">A.15</span>家具工</span></div>
              <div class="t-row t-leaf"><span class="t-dots"></span><svg width="13" height="14"><use href="#i-q"/></svg><span class="t-tx"><span class="t-lb ll">A.16</span>油漆涂</span></div>
              <div class="t-row t-leaf"><span class="t-dots"></span><svg width="13" height="14"><use href="#i-q"/></svg><span class="t-tx"><span class="t-lb ll">A.17</span>广告牌</span></div>
              <div class="t-row t-leaf"><span class="t-dots"></span><svg width="13" height="14"><use href="#i-q"/></svg><span class="t-tx"><span class="t-lb">A.18</span>景观工</span></div>
              <div class="t-row t-leaf"><span class="t-dots"></span><svg width="13" height="14"><use href="#i-q"/></svg><span class="t-tx"><span class="t-lb">A.19</span>石作工</span></div>
              <div class="t-row t-leaf"><span class="t-dots"></span><svg width="13" height="14"><use href="#i-q"/></svg><span class="t-tx"><span class="t-lb">A.20</span>装饰工</span></div>
            </div>
            <div class="sb-v d-flex flex-column">
              <span class="sb-btn"><svg width="11" height="8"><use href="#i-up"/></svg></span>
              <span class="sb-thumb-v"><span class="grip-l"></span></span>
              <span class="flex-grow-1"></span>
              <span class="sb-btn"><svg width="11" height="8"><use href="#i-dn"/></svg></span>
            </div>
          </div>
          <div class="sb-h d-flex">
            <span class="sb-btn"><svg width="8" height="11"><use href="#i-lf"/></svg></span>
            <span class="sb-thumb-h"><span class="grip-h"></span></span>
            <span class="flex-grow-1"></span>
            <span class="sb-btn"><svg width="8" height="11"><use href="#i-rg"/></svg></span>
          </div>
        </div>
      </div>
    </div>
    <div class="split"></div>
    <article class="doc">
      <div class="doc-in">
        <p class="hl ind"><span class="hw">11</span>、锚件、主材和流量值的消耗制度不包的话况，发生时另行计算。</p>
        <p class="hl ind"><span class="hw">12</span>、锚具用量不同可以调整。</p>
        <p class="hl ind"><span class="hw">13</span>、异形柱与剪力墙按下图单向划分：</p>
        <svg class="fig" width="762" height="243" viewBox="278 450.600 762 243">
          <g stroke="#111" fill="none" stroke-width="1.200">
            <path d="M436 491v10M553 491v10M438 496h113"/><path d="M377 531l25 12"/>
            <rect x="418" y="545" width="137" height="18"/><rect x="418" y="563" width="22" height="116"/>
            <rect x="418" y="545" width="22" height="18" fill="#666"/>
            <path d="M542 566v105"/>
            <path d="M652 484v10M822 484v10M654 489h166"/>
            <path d="M731 562H653v-18h174v18H757v116h-26z"/>
            <path d="M818 565v108"/>
          </g>
          <g fill="#111"><path d="M436 496l6-2.500v5zM553 496l-6-2.500v5zM542 564l-2.500 6h5zM542 673l-2.500-6h5zM652 489l6-2.500v5zM822 489l-6-2.500v5zM818 562l-2.500 6h5zM818 676l-2.500-6h5z"/></g>
          <g fill="#222" font-size="11.500">
            <text x="429" y="521">大于1.5m按墙计</text>
            <text x="429" y="533">小于1.5m按异形柱计</text>
            <text x="283" y="538" font-size="10.500">并入小于 1.5</text>
            <text x="283" y="554" font-size="10.500">米的柱内计</text>
            <text x="678" y="517">大于1.5m按墙计</text>
            <text x="678" y="530">小于1.5m按异形柱计</text>
            <text transform="translate(481,677) rotate(-90)">大于1.5m按墙计</text>
            <text transform="translate(496,677) rotate(-90)">小于1.5m按异形柱计</text>
            <text transform="translate(696,675) rotate(-90)">大于1.5m按墙计</text>
            <text transform="translate(711,675) rotate(-90)">小于1.5m按异形柱计</text>
          </g>
        </svg>
        <p class="hl ind ls-a"><span class="hw hw-w">14</span>、钢丝束、钢绞线的消耗量是指其本身的理论重量，并包括损耗。无粘结钢丝束单价包括保护层。</p>
        <p class="hl ind"><span class="hw hw-w">15</span>、植筋胶植筋不含抗拔试验，抗拔试验另行计算。</p>
        <p class="hl ind">五、其他说明</p>
        <p class="hl ind"><span class="hw hw-w">1</span>、钢网亭面板子目已综合考虑脊梁、圈梁的工料在内。钢网亭面板子目按单面钢网考虑，如用双面钢</p>
        <p class="hl">网，钢网消耗量乘以系数<span class="hw hw-w">1.70</span>，人工消耗量乘以系数<span class="hw hw-w">1.10</span>。</p>
        <p class="hl ind"><span class="hw hw-w">2</span>、地下室底板的后浇带套用楼板、天面板后浇带子目。</p>
      </div>
    </article>
  </div>
</section>

<svg class="annot position-absolute" width="1040" height="804" viewBox="0 0 1040 804">
  <defs>
    <linearGradient id="fadeA" gradientUnits="userSpaceOnUse" x1="510" y1="157" x2="472" y2="500"><stop offset="0" stop-color="#3a0808"/><stop offset=".35" stop-color="#b82a2a"/><stop offset=".6" stop-color="#f23c3c"/></linearGradient>
  </defs>
  <g fill="none" stroke="#c82a2a"><ellipse cx="525" cy="135" rx="16" ry="27"/><ellipse cx="341" cy="252" rx="17.500" ry="18.500"/><ellipse cx="344" cy="303" rx="34" ry="9"/></g>
  <polygon points="509.800,157 510.200,157 476,488 471,488" fill="url(#fadeA)"/>
  <polygon points="466,485 479,486 472,500" fill="#f23c3c"/>
  <polygon points="356,266 356.500,265.200 707.200,471 704.800,475" fill="#f03636"/>
  <polygon points="718,480 708.500,468.200 703,477.800" fill="#f03636"/>
  <polygon points="347,313 347.400,312.200 708.200,478.900 706.400,483.100" fill="#f03636"/>
  <polygon points="720,487 709.800,476 704.800,486" fill="#f03636"/>
</svg>
<script src="https://cdn.jsdelivr.net/npm/bootstrap@5.3.0/dist/js/bootstrap.bundle.min.js"></script>
</body></html>
